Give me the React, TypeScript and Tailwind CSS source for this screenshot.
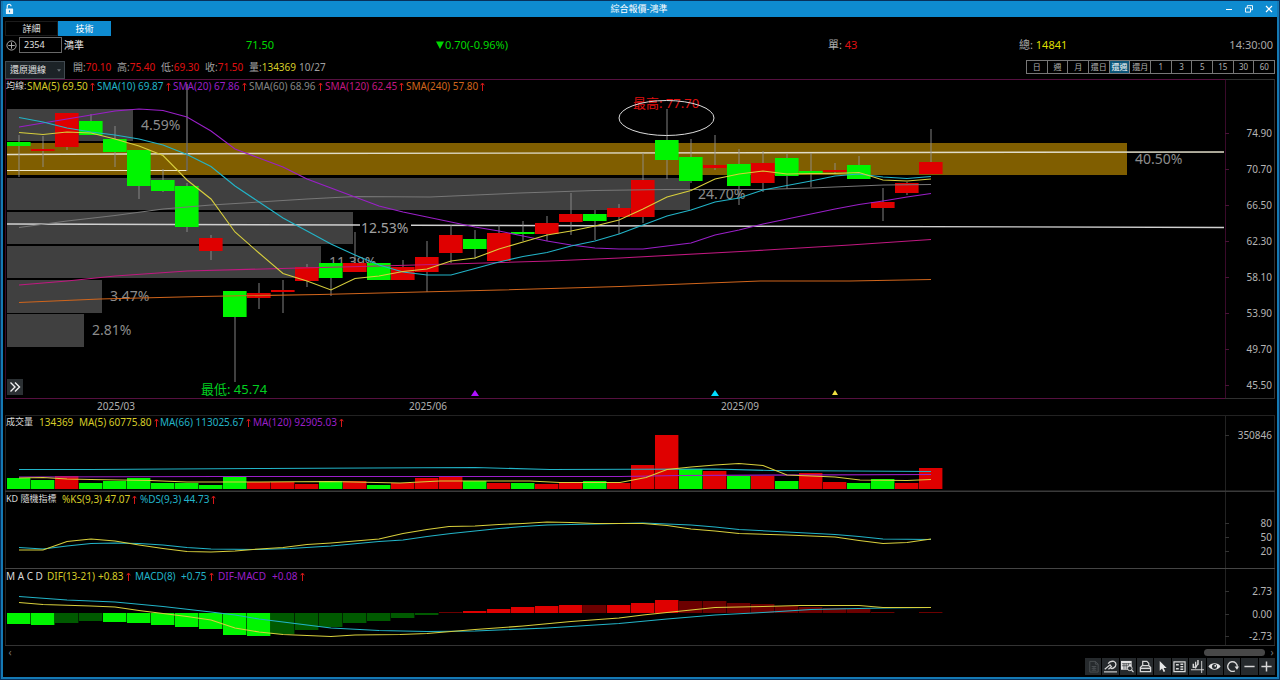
import React from "react";

const GREEN = "#00f500";
const RED = "#df0000";
const DARK_GREEN = "#005a00";
const DARK_RED = "#6c0000";
const YELLOW = "#d8cf3c";
const CYAN = "#22b4c8";
const PURPLE = "#9a1fc8";
const GRAY = "#777777";
const MAGENTA = "#c01880";
const ORANGE = "#d0651c";

const STEP = 24;
const cx = (i: number) => 19 + STEP * i;

type Candle = [color: "G" | "R", top: number, bottom: number, high: number, low: number];

const candles: Candle[] = [
  ["G", 142, 146, 135, 177], ["R", 149, 151, 136, 167], ["R", 113, 147, 113, 150],
  ["G", 121, 135, 114, 135], ["G", 139, 152, 126, 167], ["G", 150, 186, 150, 199],
  ["G", 180, 191, 169, 192], ["G", 186, 227, 183, 232], ["R", 238, 251, 235, 260],
  ["G", 291, 317, 291, 382], ["R", 293, 298, 283, 309], ["R", 290, 292, 280, 313],
  ["R", 267, 281, 264, 287], ["G", 263, 278, 263, 296], ["R", 263, 272, 232, 272],
  ["G", 263, 280, 263, 280], ["R", 267, 280, 260, 280], ["R", 257, 272, 241, 292],
  ["R", 235, 253, 225, 263], ["G", 239, 249, 230, 259], ["R", 233, 261, 225, 261],
  ["G", 232, 234, 221, 241], ["R", 223, 234, 216, 241], ["R", 214, 222, 193, 235],
  ["G", 214, 221, 210, 240], ["R", 208, 217, 204, 234], ["R", 180, 217, 153, 223],
  ["G", 140, 160, 109, 179], ["G", 157, 181, 139, 183], ["R", 165, 168, 135, 170],
  ["G", 164, 186, 149, 205], ["R", 163, 183, 151, 192], ["G", 158, 176, 154, 189],
  ["G", 171, 174, 153, 187], ["R", 170, 172, 163, 174], ["G", 165, 179, 156, 179],
  ["R", 202, 208, 188, 221], ["R", 183, 193, 182, 195], ["R", 162, 174, 129, 174],
];

const profile = [
  { y: 109, h: 32, end: 133, label: "4.59%" },
  { y: 178, h: 32, end: 690, label: "24.70%" },
  { y: 212, h: 32, end: 353, label: "12.53%" },
  { y: 246, h: 32, end: 321, label: "11.39%" },
  { y: 280, h: 33, end: 102, label: "3.47%" },
  { y: 314, h: 33, end: 84, label: "2.81%" },
  { y: 143, h: 32, end: 1127, label: "40.50%", gold: true },
];

const sma5 = [132.5, 134.5, 132, 133, 139, 146, 155.5, 180, 199, 232, 253, 273.5, 281, 290, 278.5, 276, 271.5, 269, 261, 258, 249, 242, 235, 231, 226, 220, 209, 197, 190.5, 179, 174, 171, 174, 173.5, 173.5, 172.5, 180, 181, 179];
const sma10 = [117.5, 122, 128, 132, 135, 139, 145, 154.5, 166.5, 186, 202, 218, 231, 244, 255, 265, 272, 275, 275, 268.5, 262, 256.5, 252.5, 246, 241, 234, 225, 216, 210, 202, 198, 190, 185.5, 181, 176, 174, 177, 178.5, 176.5];
const sma20 = [127, 123, 119, 115, 111, 109, 110.5, 117, 131, 149, 158, 167, 179, 188, 197, 206, 212, 217, 222, 227, 231, 236, 241, 245, 248, 249, 249, 246, 243, 235, 230, 224, 219, 214, 209, 204.5, 201, 197, 193.5];

const volumeTops = [478, 480, 476, 483, 481, 478, 483, 483, 485, 477, 482, 482, 484, 481, 481, 485, 483, 478, 476, 481, 483, 483, 484, 482, 481, 483, 465, 435, 469, 471, 476, 476, 481, 473, 482, 483, 479, 483, 468];
const volumeColors = "GGRGGGGGGGRRRGRGRRRGRGRRGRRRGRGRGRRGGRR";

const histogram: [string, number][] = [
  ["G", 11], ["G", 12], ["g", 10], ["g", 8], ["G", 9], ["G", 10], ["G", 12], ["G", 14], ["G", 16], ["G", 22], ["G", 23],
  ["g", 21], ["g", 17], ["g", 14], ["g", 10], ["g", 8], ["g", 5], ["g", 2], ["r", 1], ["R", 2], ["R", 4], ["R", 6], ["R", 7],
  ["R", 8], ["r", 8], ["R", 8], ["R", 10], ["R", 13], ["r", 12], ["r", 12], ["r", 10], ["r", 9], ["r", 7], ["r", 6], ["r", 5],
  ["r", 4], ["r", 1], ["r", 0], ["r", 1],
];

const barFill: Record<string, string> = { G: GREEN, R: RED, g: DARK_GREEN, r: DARK_RED };

function Line({ points, color }: { points: string; color: string }) {
  return <polyline points={points} fill="none" stroke={color} strokeWidth="1.1" />;
}

function Series({ values, color }: { values: number[]; color: string }) {
  return <Line points={values.map((v, i) => `${cx(i)},${v}`).join(" ")} color={color} />;
}

function AxisLabels({ items, tick = "#333" }: { items: [string, number][]; tick?: string }) {
  return (
    <g>
      {items.map(([label, y]) => (
        <g key={label}>
          <line x1="1225" x2="1229" y1={y + 0.5} y2={y + 0.5} stroke={tick} />
          <text x="1272" y={y + 4} textAnchor="end" fontSize="10" fill="#b4b4b4">{label}</text>
        </g>
      ))}
    </g>
  );
}

function Up() {
  return (
    <svg viewBox="0 0 5 9" className="ml-0.5 inline-block h-[9px] w-[5px] align-[-1px]" fill="none" stroke="#d81818">
      <path d="M2.5 9V1.500M.7 3.300L2.500 1L4.300 3.300" />
    </svg>
  );
}

function TitleBar() {
  return (
    <header className="flex h-4 items-center bg-[#0e8bd0] pr-1 pl-0.5 text-white">
      <div className="flex flex-1">
        <svg viewBox="0 0 10 13" className="h-3 w-[9px]" fill="none">
          <path d="M2.5 6V3.4a2.1 2.1 0 0 1 4.2 0" stroke="#e8f4fb" strokeWidth="1.4" />
          <rect x="1" y="6" width="8" height="6" rx="0.6" fill="#e8f4fb" />
          <rect x="4.4" y="8" width="1.2" height="2.2" fill="#0e8bd0" />
        </svg>
      </div>
      <h1 className="text-[9px] leading-4">綜合報價-鴻準</h1>
      <div className="flex flex-1 justify-end gap-3">
        <button aria-label="最小化" className="h-4 w-2">
          <svg viewBox="0 0 8 8" className="h-2 w-2" stroke="white"><path d="M1 4.5h6" /></svg>
        </button>
        <button aria-label="還原" className="h-4 w-2">
          <svg viewBox="0 0 8 8" className="h-2 w-2" stroke="white" strokeWidth="0.9" fill="none">
            <path d="M.5 2.9h5v4.2h-5zM2.3 2.7V.6h5.2v4.2H5.7" />
          </svg>
        </button>
        <button aria-label="關閉" className="h-4 w-2">
          <svg viewBox="0 0 8 8" className="h-2 w-2" stroke="white" strokeWidth="1.2"><path d="M1 1l6 6M7 1L1 7" /></svg>
        </button>
      </div>
    </header>
  );
}

function QuoteRow() {
  return (
    <div className="grid h-[19px] grid-cols-[241fr_190fr_392fr_191fr_256fr] items-center pb-px text-[11px] leading-4 text-[#a8a8a8]">
      <div className="flex items-center">
        <button aria-label="加入自選" className="flex pl-px">
          <svg viewBox="0 0 12 12" className="h-[11px] w-[11px]" fill="none" stroke="#b8b8b8">
            <circle cx="6" cy="6" r="5" /><path d="M6 2.5v7M2.5 6h7" />
          </svg>
        </button>
        <input
          aria-label="股票代號"
          defaultValue="2354"
          className="ml-0.5 h-4 w-[43px] border border-[#686868] bg-black pl-1 text-[9px] text-[#e0e0e0]"
        />
        <span className="pl-0.5 text-[10px] text-[#e8e8e8]">鴻準</span>
      </div>
      <span className="text-[#00d800]">71.50</span>
      <span className="flex items-center text-[#00d800]">
        <svg viewBox="0 0 8 8" className="mr-px h-2 w-2" fill="#00d800"><path d="M0 .5h8L4 8z" /></svg>
        0.70(-0.96%)
      </span>
      <span>單: <b className="font-normal text-[#e01010]">43</b></span>
      <span className="flex justify-between pr-0.5">
        <span>總: <b className="font-normal text-[#dede00]">14841</b></span>
        <span>14:30:00</span>
      </span>
    </div>
  );
}

const ohlc = [["開", "70.10"], ["高", "75.40"], ["低", "69.30"], ["收", "71.50"]];
const periods = ["日", "週", "月", "還日", "還週", "還月", "1", "3", "5", "15", "30", "60"];

function ControlRow() {
  return (
    <div className="flex h-6 items-center text-[10px] leading-3 text-[#a0a0a0]">
      <div className="relative mt-[5px]">
        <select aria-label="K線週期" className="h-[18px] w-[60px] appearance-none border border-[#414a50] bg-[#1c2327] pl-1 text-[9px] text-[#e0e0e0]">
          <option>還原週線</option>
        </select>
        <svg viewBox="0 0 6 4" className="pointer-events-none absolute top-2 right-1 h-[3px] w-1" fill="#6a7378"><path d="M0 0h6L3 4z" /></svg>
      </div>
      <div className="flex pl-2">
        {ohlc.map(([k, v]) => (
          <span key={k} className="w-11">{k}:<b className="font-normal text-[#e01010]">{v}</b></span>
        ))}
        <span className="w-[50px]">量:<b className="font-normal text-[#d6cc28]">134369</b></span>
        <span>10/27</span>
      </div>
      <div className="ml-auto flex h-3.5 w-[249px] border-y border-l border-[#777]">
        {periods.map((p) => (
          <button
            key={p}
            className={
              p === "還週"
                ? "flex-1 basis-0 border-r border-[#888] bg-[#0d5578] text-[8px] leading-3 text-white"
                : "flex-1 basis-0 border-r border-[#777] text-[8px] leading-3 text-[#b0b0b0]"
            }
          >
            {p}
          </button>
        ))}
      </div>
    </div>
  );
}

function PricePane() {
  return (
    <section className="relative">
      <svg viewBox="5 79 1270 336" className="block h-auto w-full" role="img" aria-label="還原週線圖">
        {profile.map((b) => (
          <g key={b.label}>
            <rect x="7" y={b.y} width={b.end - 7} height={b.h} fill={b.gold ? "#805e00" : "#404040"} />
            {b.label !== "12.53%" && (
              <text x={b.end + 8} y={b.y + 21} fontSize="14" fill="#8c8c8c">{b.label}</text>
            )}
          </g>
        ))}
        <path d="M5.5 398V79.5M1225.5 398V79.5" stroke="#3a0a2a" />
        <path d="M5 79.5H1225M5 398.5H1225" stroke="#561040" />
        <path d="M1225 79.5H1275M1225 398.5H1275M1274.5 80V398" stroke="#303030" />
        <path d="M7 154.5L250 153.5L1224 152" stroke="#e0dcc8" strokeWidth="1.4" fill="none" />
        <path d="M7 224L360 225M411 225.2L1224 227.5" stroke="#d0d0d0" strokeWidth="1.4" fill="none" />
        <text x="361" y="233" fontSize="14" fill="#a0a0a0">12.53%</text>
        <path d="M7 170.5H187" stroke="#f0e8c8" />
        <path d="M187 84V171" stroke="#6a6a6a" strokeWidth="1.4" />
        {candles.map(([c, top, bottom, high, low], i) => (
          <g key={i}>
            <line x1={cx(i)} x2={cx(i)} y1={high} y2={low} stroke="#909090" strokeOpacity="0.6" strokeWidth="1.5" />
            <rect x={cx(i) - 12} y={top} width="23.6" height={bottom - top} fill={c === "G" ? GREEN : RED} />
          </g>
        ))}
        <Line color={ORANGE} points="19,302.5 100,299 200,296.5 320,294.5 500,290 620,286.5 760,281 850,281 931,279.5" />
        <Line color={MAGENTA} points="19,285 67,281 115,276 187,271 300,268 380,266 450,264 550,261 620,258 750,251 850,245 931,239.5" />
        <Line color={GRAY} points="19,227.5 67,221 115,215.5 163,209 211,205 259,202 307,199 355,196.5 430,197 520,193 595,190.5 667,189.5 760,189.5 811,188 883,185 931,184.5" />
        <Series color={PURPLE} values={sma20} />
        <Series color={CYAN} values={sma10} />
        <Series color={YELLOW} values={sma5} />
        <text x="633" y="108" fontSize="13" fill="#e01010">最高: 77.70</text>
        <ellipse cx="666.5" cy="118" rx="47.5" ry="17.5" fill="none" stroke="#dcdcdc" />
        <text x="201" y="394" fontSize="13" fill="#00d020">最低: 45.74</text>
        <path d="M471 396L475 390L479 396z" fill="#b010ff" />
        <path d="M711 396L715 390L719 396z" fill="#00dcff" />
        <path d="M832 395L835 390L838 395z" fill="#f0e040" />
        {[["2025/03", 97], ["2025/06", 409], ["2025/09", 721]].map(([d, x]) => (
          <text key={d} x={x} y="410" fontSize="10" fill="#b0b0b0">{d}</text>
        ))}
        <AxisLabels
          tick="#4a1238"
          items={[["74.90", 133], ["70.70", 169], ["66.50", 205], ["62.30", 241], ["58.10", 277], ["53.90", 313], ["49.70", 349], ["45.50", 385]]}
        />
      </svg>
      <div className="absolute top-0 left-px flex h-3.5 items-center text-[10px] leading-3 whitespace-nowrap">
        <span className="w-[21px] text-[9px] text-[#d8d8d8]">均線:</span>
        <span className="w-[70px] text-[#d6cc28]">SMA(5) 69.50<Up /></span>
        <span className="w-[76px] text-[#22b4c8]">SMA(10) 69.87<Up /></span>
        <span className="w-[76px] text-[#9a1fc8]">SMA(20) 67.86<Up /></span>
        <span className="w-[76px] text-[#858585]">SMA(60) 68.96<Up /></span>
        <span className="w-[81px] text-[#c01880]">SMA(120) 62.45<Up /></span>
        <span className="text-[#d0651c]">SMA(240) 57.80<Up /></span>
      </div>
      <button aria-label="展開" className="absolute bottom-5 left-0.5 flex h-4 w-4 items-center justify-center bg-[#2b3033]">
        <svg viewBox="0 0 12 12" className="h-3 w-3" fill="none" stroke="#f0f0f0" strokeWidth="1.4">
          <path d="M1.5 1.5L6 6l-4.500 4.500M6 1.500L10.500 6L6 10.500" />
        </svg>
      </button>
    </section>
  );
}

function VolumePane() {
  return (
    <section className="relative">
      <svg viewBox="5 415 1270 77" className="block h-auto w-full" role="img" aria-label="成交量圖">
        <path d="M5.5 415V492M1225.500 415V492M1274.500 415V492" stroke="#222" />
        <path d="M5 415.500H1275" stroke="#222" />
        <path d="M5 491.200H1275" stroke="#3a3a3a" strokeWidth="1.600" />
        {volumeTops.map((top, i) => (
          <rect key={i} x={cx(i) - 12} y={top} width="23.400" height={489 - top} fill={barFill[volumeColors[i]]} />
        ))}
        <Line color={CYAN} points="19,469.500 90,469.500 265,468.500 475,467.500 550,469.500 715,469 770,470.500 931,471.500" />
        <Line color={PURPLE} points="19,477 220,476.500 620,476.500 680,475.500 931,474.500" />
        <Line color={YELLOW} points="19,478 43,477.500 67,479 91,479.500 150,480.500 187,482 260,482 330,481.500 400,483 440,481 530,481 560,482.500 620,482.500 646,477.500 667,469.500 691,467 715,465 739,463.500 763,465.500 787,475 835,477 860,480 907,480.500 931,479.500" />
        <AxisLabels items={[["350846", 435]]} />
      </svg>
      <div className="absolute top-0 left-px flex h-[13px] items-center text-[10px] leading-3 whitespace-nowrap">
        <span className="w-[33px] text-[9px] text-[#d8d8d8]">成交量</span>
        <span className="w-10 text-[#d6cc28]">134369</span>
        <span className="w-[81px] text-[#d6cc28]">MA(5) 60775.80<Up /></span>
        <span className="w-[93px] text-[#22b4c8]">MA(66) 113025.67<Up /></span>
        <span className="text-[#9a1fc8]">MA(120) 92905.03<Up /></span>
      </div>
    </section>
  );
}

function KdPane() {
  return (
    <section className="relative">
      <svg viewBox="5 492 1270 77" className="block h-auto w-full" role="img" aria-label="KD 隨機指標圖">
        <path d="M5.500 492V569M1225.500 492V569M1274.500 492V569" stroke="#222" />
        <path d="M5 568.500H1275" stroke="#454545" />
        <Line color={CYAN} points="19,547.500 43,549 67,546 91,543.500 115,543 139,543.500 163,545 187,547.500 211,549 259,549.500 290,548.500 331,546 379,541.500 403,540 427,536.500 451,533.500 475,531 499,528.500 523,526.500 547,525 595,524 643,523 691,525 715,527 739,529.500 787,532 835,534.500 859,536.500 883,539 931,539.500" />
        <Line color={YELLOW} points="19,550 43,550 67,541.500 91,539 115,541 139,545 163,548.500 187,551.500 211,552 235,551 259,549 283,547.500 307,544.500 331,543 355,541 379,539 403,533.500 427,529.500 449,526.500 475,526 499,524.500 523,523.500 547,522 571,522.500 595,523.500 643,523.500 667,525.500 691,529 715,531 739,533.500 787,535 835,537 859,540.500 883,543.500 907,542.500 931,539" />
        <AxisLabels items={[["80", 523], ["50", 537], ["20", 551]]} />
      </svg>
      <div className="absolute top-0 left-px flex h-[13px] items-center text-[10px] leading-3 whitespace-nowrap">
        <span className="w-[56px] text-[9px] text-[#d8d8d8]">KD 隨機指標</span>
        <span className="w-[78px] text-[#d6cc28]">%KS(9,3) 47.07<Up /></span>
        <span className="text-[#22b4c8]">%DS(9,3) 44.73<Up /></span>
      </div>
    </section>
  );
}

function MacdPane() {
  return (
    <section className="relative">
      <svg viewBox="5 569 1270 77" className="block h-auto w-full" role="img" aria-label="MACD 圖">
        <path d="M5.500 569V646M1225.500 569V646M1274.500 569V646" stroke="#222" />
        <path d="M5 645.500H1275" stroke="#333" />
        {histogram.map(([c, h], i) => (
          <rect key={i} x={cx(i) - 12} y={c.toUpperCase() === "G" ? 613 : 613 - h} width="23.400" height={h} fill={barFill[c]} />
        ))}
        <Line color={CYAN} points="19,596.500 67,600 115,602 163,606.500 211,612 235,615 259,619 283,622 307,625 331,628 379,630.500 427,631.500 475,631 547,628 619,623.500 667,619 715,615 763,612.500 811,609.500 859,608.500 883,608 931,607.500" />
        <Line color={YELLOW} points="19,602.500 43,604.500 91,606 115,607 139,610.500 163,613.500 187,616.500 211,620 235,628 259,632 283,634.500 307,635.500 331,636.500 355,635 400,634.500 427,633.500 451,631.500 475,629.500 523,626 571,621.500 619,618 643,615 667,612.500 691,610 715,607.500 763,606.500 800,605.500 859,605.500 883,607.500 931,607.500" />
        <AxisLabels items={[["2.73", 591], ["0.00", 614], ["-2.73", 636]]} />
      </svg>
      <div className="absolute top-0 left-px flex h-[13px] items-center text-[10px] leading-3 whitespace-nowrap">
        <span className="w-[41px] text-[#d8d8d8]">M A C D</span>
        <span className="w-[51px] text-[#d6cc28]">DIF(13-21)</span>
        <span className="w-[37px] text-[#d6cc28]">+0.83<Up /></span>
        <span className="w-[46px] text-[#22b4c8]">MACD(8)</span>
        <span className="w-[37px] text-[#22b4c8]">+0.75<Up /></span>
        <span className="w-[54px] text-[#9a1fc8]">DIF-MACD</span>
        <span className="text-[#9a1fc8]">+0.08<Up /></span>
      </div>
    </section>
  );
}

const tools: { name: string; dim?: boolean; art: React.ReactNode }[] = [
  { name: "匯出", dim: true, art: <path d="M3 13V1.500h6L12 4.500V13zM9 1.500v3h3M5 7h5M5 9h5M5 11h5M7.500 7v4" /> },
  {
    name: "畫線",
    art: <><path d="M.8 10L6.500 5.200L8 7.200L4.800 10" strokeWidth="1.300" /><path d="M4.500 3.800C6 1.600 8.500 1 10.800 1.600C13.800 3 13.200 6.500 10.800 8.200C9.500 9.200 8 9.300 7 8.600" strokeWidth="1.400" /><path d="M0 12.800h14" strokeWidth="1.200" /></>,
  },
  {
    name: "資料查詢",
    art: <><rect x="0" y="1" width="11.500" height="9.500" fill="#e4e4e4" stroke="none" /><path d="M1 4h10M1 6.200h7M3.200 3.500V10M5.600 3.500V10M8 3.500V6" stroke="#2b3033" strokeWidth="0.700" /><circle cx="9.500" cy="9" r="2.500" fill="#2b3033" /><path d="M11.300 10.800L13.500 13" strokeWidth="1.300" /></>,
  },
  {
    name: "列印",
    art: <><path d="M4 6V1.500h4.500L10.500 3.500V6" strokeWidth="1.300" /><path d="M1.500 12.500V8L3.500 6h7l2 2v4.500z" strokeWidth="1.400" /><path d="M2 9h10" strokeWidth="1.600" /></>,
  },
  { name: "選取", art: <path d="M4 1v10.500l2.500-2.300 1.700 3.800 1.700-.8-1.700-3.600h3.300z" fill="#e8e8e8" stroke="none" /> },
  {
    name: "明細",
    art: <><path d="M1 2h12v10.500H1z" strokeWidth="1.300" /><path d="M3.200 5h3M3.200 9.500h3M8 4.500h3M8 7.200h3M8 10h3" strokeWidth="1.600" /></>,
  },
  {
    name: "K線設定",
    art: <><path d="M0 10.500h14M11.500 1v13" /><path d="M2.500 4v4.500M7.500 0v5" strokeWidth="1.600" /><path d="M5 2v7M2.500 7L5 8.500L7.500 4" strokeWidth="1.300" /></>,
  },
  {
    name: "顯示",
    art: <><path d="M.5 7C3 2.500 11 2.500 13.500 7C11 11.500 3 11.500 .5 7z" fill="#e8e8e8" stroke="none" /><circle cx="7" cy="7" r="2.700" fill="#2b3033" stroke="none" /><circle cx="7.800" cy="6.300" r="1" fill="#fff" stroke="none" /></>,
  },
  {
    name: "重新整理",
    art: <><path d="M9.500 11.600A5.200 5.200 0 1 1 12.200 7.200" strokeWidth="1.500" /><path d="M9.300 7h4.700L11.800 10.500z" fill="#e4e4e4" stroke="none" /></>,
  },
  { name: "縮小", art: <path d="M1.500 7h11" strokeWidth="1.600" /> },
  { name: "放大", art: <path d="M1.500 7h11M7 1.500v11" strokeWidth="1.600" /> },
];

function Footer() {
  return (
    <footer className="pb-0.5">
      <div className="flex h-3 items-center text-[10px] leading-3 text-[#777]">
        <button aria-label="向左捲動" className="w-2.5">‹</button>
        <div className="flex flex-1 justify-end">
          <div className="mr-1 h-[7px] w-[61px] rounded-sm bg-[#484848]" />
        </div>
        <button aria-label="向右捲動" className="w-1.5">›</button>
      </div>
      <div className="ml-auto flex h-[17px] w-[190px] gap-px">
        {tools.map((t) => (
          <button key={t.name} aria-label={t.name} className="flex flex-1 items-center justify-center bg-[#262a2d]">
            <svg viewBox="0 0 14 14" className="h-[13px] w-[13px]" fill="none" stroke={t.dim ? "#4c5053" : "#d8d8d8"}>
              {t.art}
            </svg>
          </button>
        ))}
      </div>
    </footer>
  );
}

export default function App() {
  return (
    <div className="min-h-screen bg-[#08305a] p-px font-['Noto_Sans','Noto_Sans_CJK_TC',sans-serif]">
      <div className="border-2 border-t-0 border-[#1579b4] bg-black">
        <TitleBar />
        <main className="px-0.5 pt-1">
          <nav className="flex h-[15px] text-[9px] leading-[14px]">
            <button className="w-[53px] border border-[#1c1c1c] leading-3 text-[#e0e0e0]">詳細</button>
            <button className="w-[53px] bg-[#0e8bd0] text-white">技術</button>
          </nav>
          <QuoteRow />
          <ControlRow />
          <PricePane />
          <VolumePane />
          <KdPane />
          <MacdPane />
          <Footer />
        </main>
      </div>
    </div>
  );
}
